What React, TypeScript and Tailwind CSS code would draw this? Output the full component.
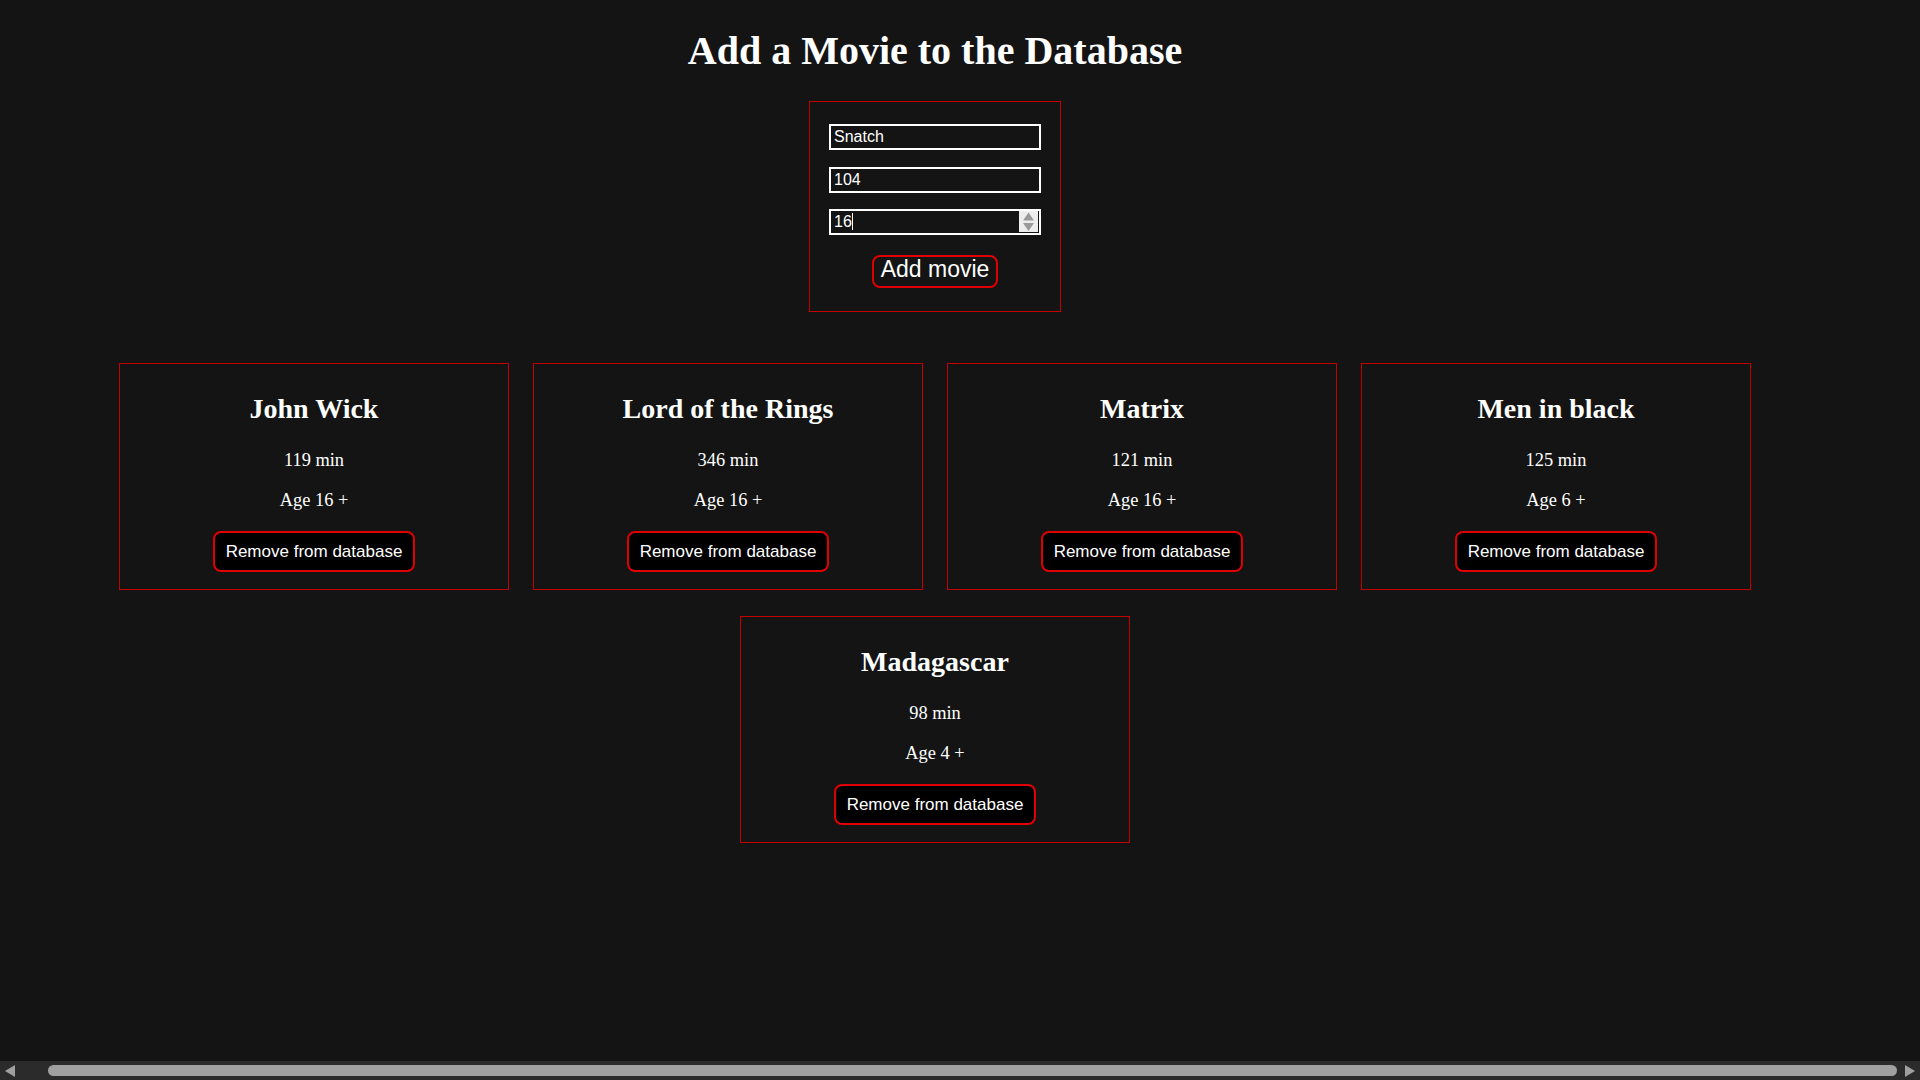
import { useState } from "react"

type Movie = {
  title: string
  minutes: number
  age: number
}

const movies: Movie[] = [
  { title: "John Wick", minutes: 119, age: 16 },
  { title: "Lord of the Rings", minutes: 346, age: 16 },
  { title: "Matrix", minutes: 121, age: 16 },
  { title: "Men in black", minutes: 125, age: 6 },
  { title: "Madagascar", minutes: 98, age: 4 },
]

function MovieCard({ movie }: { movie: Movie }) {
  return (
    <div className="w-[390px] border border-[#c40000] pt-[29px] pb-[17px] flex flex-col items-center text-white">
      <h2 className="text-[28px] leading-[32px] font-bold">{movie.title}</h2>
      <p className="mt-[24px] text-[18.4px] leading-[22px]">{movie.minutes} min</p>
      <p className="mt-[18px] text-[18.4px] leading-[22px]">Age {movie.age} +</p>
      <button className="mt-[20px] h-[41px] px-[11px] pt-[9px] pb-[9px] bg-black border-2 border-[#e00000] rounded-lg text-[17px] leading-[19px] text-white font-['Liberation_Sans',Arial,sans-serif]">
        Remove from database
      </button>
    </div>
  )
}

export default function App() {
  const [title, setTitle] = useState("Snatch")
  const [length, setLength] = useState("104")
  const [age, setAge] = useState("16")

  const inputClass =
    "w-full h-[26px] border-2 border-white bg-transparent px-[3px] text-[16px] text-white outline-none font-['Liberation_Sans',Arial,sans-serif]"

  return (
    <div className="h-screen flex flex-col bg-[#141414] font-['Liberation_Serif','Times_New_Roman',serif] overflow-hidden">
      <main className="flex-1 w-[1870px] flex flex-col items-center pt-[28px]">
        <h1 className="text-[40px] leading-[46px] font-bold text-white">Add a Movie to the Database</h1>

        {/* form */}
        <form
          className="mt-[27px] w-[252px] border border-[#c40000] px-[19px] pt-[22px] pb-[23px] flex flex-col items-center"
          onSubmit={(e) => e.preventDefault()}
        >
          <div className="w-full flex flex-col gap-[16.5px]">
            <input className={inputClass} value={title} onChange={(e) => setTitle(e.target.value)} />
            <input className={inputClass} value={length} onChange={(e) => setLength(e.target.value)} />
            <div className="relative">
              <input className={inputClass} value={age} onChange={(e) => setAge(e.target.value)} />
              <span className="absolute left-[23px] top-[4px] h-[17px] w-px bg-white" />
              <span className="absolute right-[3px] top-[2px] w-[19px] h-[21px] bg-[#ededed]">
                <svg width="19" height="21" viewBox="0 0 19 21">
                  <polygon points="4,9.5 15,9.5 9.5,1.5" fill="#9a9a9a" />
                  <polygon points="4,12 15,12 9.5,20" fill="#9a9a9a" />
                </svg>
              </span>
            </div>
          </div>
          <button className="mt-[20px] h-[33px] px-[7px] pt-0 pb-[4px] border-2 border-[#e00000] rounded-lg text-[23px] leading-[25px] text-white font-['Liberation_Sans',Arial,sans-serif]">
            Add movie
          </button>
        </form>

        {/* movie list */}
        <div className="mt-[51px] w-full flex flex-wrap justify-center gap-x-[24px] gap-y-[26px]">
          {movies.map((m) => (
            <MovieCard key={m.title} movie={m} />
          ))}
        </div>
      </main>

      {/* horizontal scrollbar */}
      <div className="h-[19px] bg-[#2b2b2b] flex items-center pl-[5px] pr-[5px]">
        <svg width="10" height="12" viewBox="0 0 10 12">
          <polygon points="10,0 10,12 0,6" fill="#a0a0a0" />
        </svg>
        <div className="ml-[33px] flex-1 h-[11px] rounded-full bg-[#a0a0a0]" />
        <svg className="ml-[8px]" width="10" height="12" viewBox="0 0 10 12">
          <polygon points="0,0 0,12 10,6" fill="#a0a0a0" />
        </svg>
      </div>
    </div>
  )
}
